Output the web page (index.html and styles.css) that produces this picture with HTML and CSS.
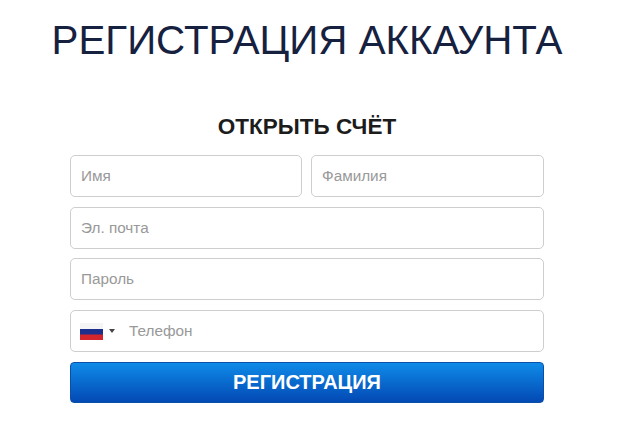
FILE: index.html
```html
<!DOCTYPE html>
<html lang="ru">
<head>
  <meta charset="UTF-8">
  <title>Регистрация аккаунта</title>
  <link rel="stylesheet" href="styles.css">
</head>
<body>
  <h1 class="title">РЕГИСТРАЦИЯ АККАУНТА</h1>
  <form class="form">
    <h2 class="form-title">ОТКРЫТЬ СЧЁТ</h2>
    <div class="row">
      <input class="field" type="text" placeholder="Имя">
      <input class="field" type="text" placeholder="Фамилия">
    </div>
    <input class="field" type="text" placeholder="Эл. почта">
    <input class="field" type="text" placeholder="Пароль">
    <div class="field phone">
      <svg class="flag" width="23" height="17" viewBox="0 0 23 17">
        <rect width="23" height="6" fill="#f5f5f5"/>
        <rect y="6" width="23" height="6" fill="#1c2f8c"/>
        <rect y="11.5" width="23" height="5.5" fill="#d3262c"/>
      </svg>
      <span class="caret"></span>
      <span class="phone-text">Телефон</span>
    </div>
    <button class="submit" type="button">РЕГИСТРАЦИЯ</button>
  </form>
</body>
</html>
```

FILE: styles.css
```css
body {
  margin: 0;
  background: #fff;
  font-family: "Liberation Sans", Arial, sans-serif;
}

.title {
  margin: 0;
  padding: 18px 6px 0 0;
  text-align: center;
  font-size: 40.3px;
  line-height: 46px;
  font-weight: normal;
  color: #16213f;
}

.form {
  width: 474px;
  margin: 50px 0 0 70px;
  display: flex;
  flex-direction: column;
  gap: 9.75px;
}

.form-title {
  margin: 0 0 5px;
  text-align: center;
  font-size: 22.5px;
  line-height: 26px;
  color: #1c1c1c;
}

.row {
  display: grid;
  grid-template-columns: 232px 1fr;
  gap: 9px;
}

.row .field {
  min-width: 0;
}

.field {
  box-sizing: border-box;
  height: 42px;
  padding: 0 10px;
  border: 1px solid #cecece;
  border-radius: 5px;
  font-family: inherit;
  font-size: 15.3px;
  background: #fff;
}

.field::placeholder,
.phone-text {
  color: #999;
  opacity: 1;
}

.phone {
  display: flex;
  align-items: center;
}

.flag {
  margin-left: -1px;
}

.caret {
  margin-left: 6px;
  border-left: 3px solid transparent;
  border-right: 3px solid transparent;
  border-top: 4px solid #444;
}

.phone-text {
  margin-left: 14px;
}

.submit {
  height: 41px;
  border: 1px solid #0a4fa8;
  border-radius: 4px;
  background: linear-gradient(#0f8be8, #0349b4);
  color: #fff;
  font-family: inherit;
  font-size: 20px;
  font-weight: bold;
}
```
